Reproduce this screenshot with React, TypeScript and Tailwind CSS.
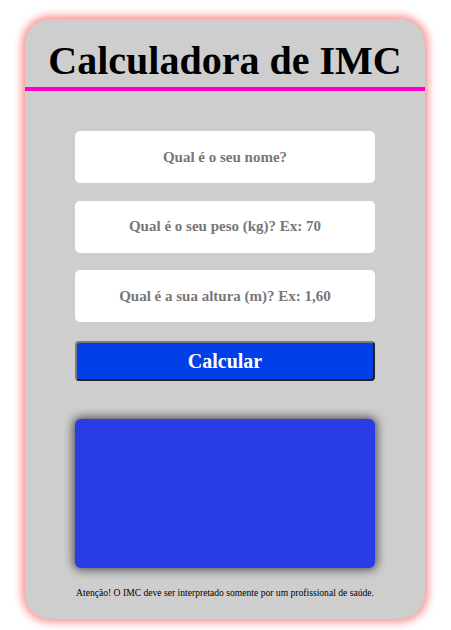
import React, { useState } from "react";

const serif = "font-['Liberation_Serif','Times_New_Roman',serif]";

const App: React.FC = () => {
    const [nome, setNome] = useState("");
    const [peso, setPeso] = useState("");
    const [altura, setAltura] = useState("");
    const [resultado, setResultado] = useState("");

    const calcular = () => {
        const p = parseFloat(peso.replace(",", "."));
        const a = parseFloat(altura.replace(",", "."));
        if (!p || !a) return;
        const imc = p / (a * a);
        setResultado(`${nome ? nome + ", s" : "S"}eu IMC é ${imc.toFixed(2)}`);
    };

    const inputClass =
        "w-[300px] h-[52px] rounded-[5px] bg-white text-center text-[15px] font-bold text-gray-800 placeholder:text-[#777] outline-none " +
        serif;

    return (
        <div className={`w-[451px] h-[630px] bg-white flex pl-[25px] pt-[19px] ${serif}`}>
            <div className="w-[400px] h-[600px] bg-[#cecece] rounded-[25px] shadow-[0_0_8px_3px_#ff8a8a] flex flex-col items-center">
                {/* Titulo */}
                <h1 className="w-full text-center text-[40px] leading-[44px] font-bold text-black pt-[20px] pb-[4px] border-b-[4px] border-[#ff00cc]">
                    Calculadora de IMC
                </h1>

                {/* Formulario */}
                <div className="flex flex-col items-center gap-[17.5px] mt-[40px]">
                    <input
                        className={inputClass}
                        placeholder="Qual é o seu nome?"
                        value={nome}
                        onChange={(e) => setNome(e.target.value)}
                    />
                    <input
                        className={inputClass}
                        placeholder="Qual é o seu peso (kg)? Ex: 70"
                        value={peso}
                        onChange={(e) => setPeso(e.target.value)}
                    />
                    <input
                        className={inputClass}
                        placeholder="Qual é a sua altura (m)? Ex: 1,60"
                        value={altura}
                        onChange={(e) => setAltura(e.target.value)}
                    />
                    <button
                        onClick={calcular}
                        className={`w-[300px] h-[40px] mt-[1px] rounded-[4px] bg-[#0040e6] text-white text-[20px] font-bold border-2 border-t-[#7a7a7a] border-l-[#7a7a7a] border-b-[#222] border-r-[#222] ${serif}`}
                    >
                        Calcular
                    </button>
                </div>

                {/* Resultado */}
                <div className="w-[300px] h-[149px] mt-[38px] rounded-[6px] bg-[#293ce6] shadow-[0_0_10px_2px_rgba(0,0,0,0.6)] flex items-center justify-center text-white text-[18px] font-bold">
                    {resultado}
                </div>

                <p className="mt-[18px] text-[9.6px] text-black text-center">
                    Atenção! O IMC deve ser interpretado somente por um profissional de saúde.
                </p>
            </div>
        </div>
    );
};

export default App;
